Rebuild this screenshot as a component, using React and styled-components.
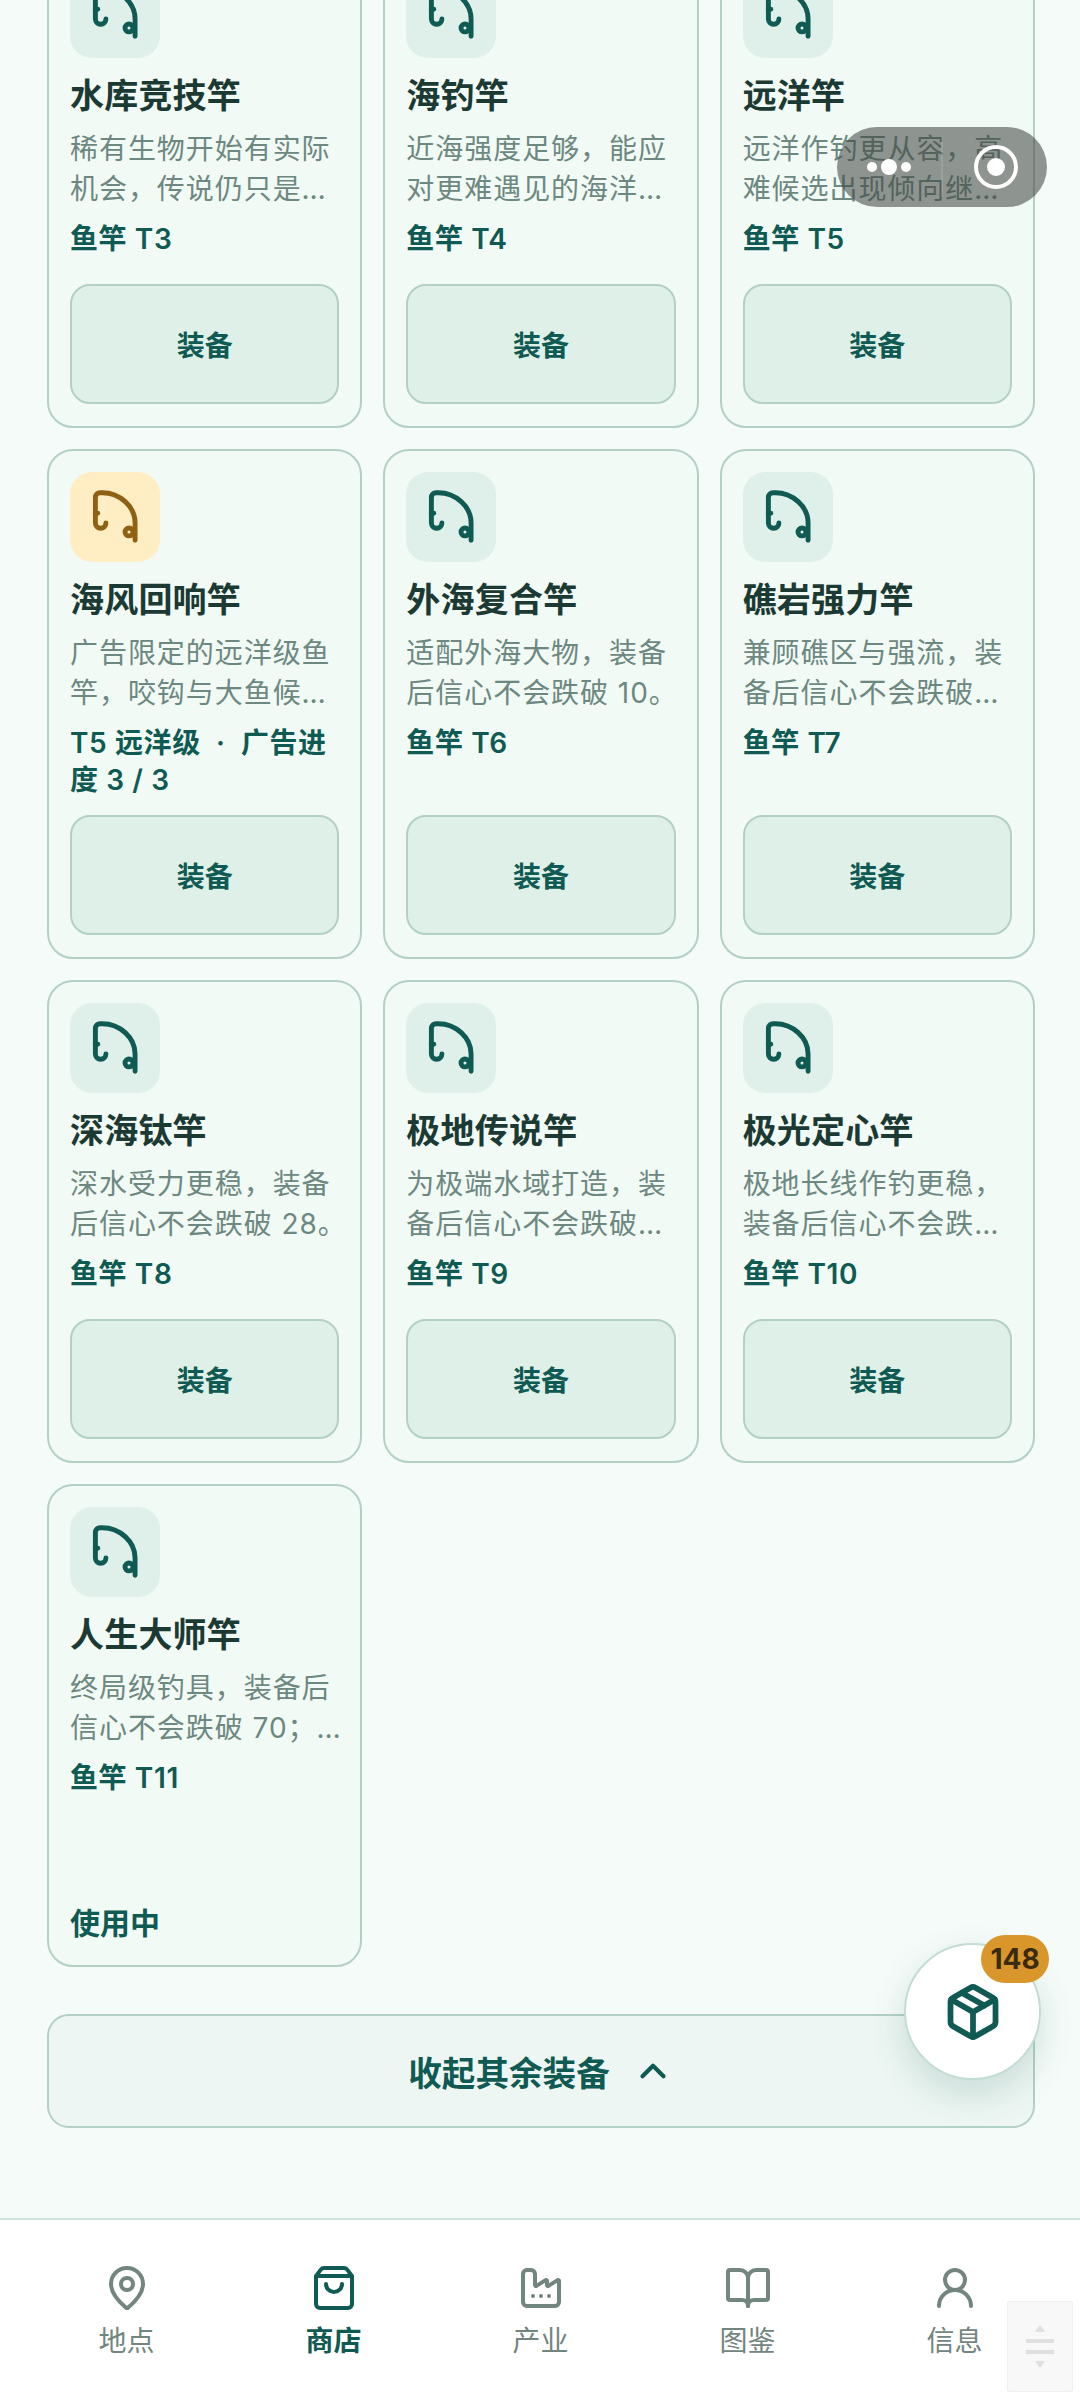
import styled, { createGlobalStyle } from 'styled-components'
import { BookOpen, ChevronUp, Factory, MapPin, Package, ShoppingBag, UserRound } from 'lucide-react'

const GlobalStyle = createGlobalStyle`
  html, body {
    margin: 0;
    padding: 0;
    background: #f5fbf8;
  }
  * {
    box-sizing: border-box;
  }
  body {
    font-family: "Inter", "Noto Sans CJK SC", sans-serif;
  }
`;

const Page = styled.div`
  position: relative;
  width: 1080px;
  height: 2400px;
  display: flex;
  flex-direction: column;
  overflow: hidden;
  background: #f5fbf8;
`;

const Scroller = styled.div`
  flex: 1;
  min-height: 0;
  overflow: hidden;
  padding: 0 45px 0 47px;
`;

/* the page is photographed scrolled, the first row is cut by the top edge */
const Grid = styled.div`
  margin-top: -55px;
  display: grid;
  grid-template-columns: repeat(3, 1fr);
  gap: 21px;
`;

const Card = styled.div`
  display: flex;
  flex-direction: column;
  padding: 21px 21px 22px;
  border: 2px solid #b2d0c6;
  border-radius: 26px;
  background: #f2faf6;
`;

const IconBox = styled.div`
  width: 90px;
  height: 90px;
  display: flex;
  align-items: center;
  justify-content: center;
  border-radius: 22px;
  background: ${props => props.ad ? '#ffeec4' : '#dff0ea'};
  color: ${props => props.ad ? '#8f6112' : '#0f5a52'};
`;

const Title = styled.div`
  margin-top: 16px;
  font-size: 34px;
  line-height: 44px;
  letter-spacing: 0.2px;
  font-weight: 700;
  color: #1c3a34;
  white-space: nowrap;
`;

const Desc = styled.div`
  margin: 11px -8px 0 0;
  height: 80px;
  font-size: 28px;
  line-height: 40px;
  letter-spacing: 0.95px;
  color: #6d8880;
  display: -webkit-box;
  -webkit-box-orient: vertical;
  -webkit-line-clamp: 2;
  overflow: hidden;
`;

const Meta = styled.div`
  margin-top: 12px;
  min-height: 47px;
  font-size: 28px;
  line-height: 37px;
  letter-spacing: 0.6px;
  font-weight: 600;
  color: #0f5a52;
`;

const Footer = styled.div`
  margin-top: auto;
  padding-top: 13px;
  min-height: 136px;
  display: flex;
  align-items: flex-end;
`;

const EquipButton = styled.div`
  width: 100%;
  height: 120px;
  display: flex;
  align-items: center;
  justify-content: center;
  border: 2px solid #b2d0c6;
  border-radius: 20px;
  background: #dff0e9;
  font-size: 28px;
  font-weight: 700;
  color: #0f5a52;
`;

const InUse = styled.div`
  font-size: 30px;
  line-height: 40px;
  font-weight: 700;
  color: #0f5a52;
`;

const Toggle = styled.div`
  margin-top: 47px;
  height: 114px;
  display: flex;
  align-items: center;
  justify-content: center;
  gap: 22px;
  border: 2px solid #b2d0c6;
  border-radius: 22px;
  background: #edf6f2;
  font-size: 33.6px;
  font-weight: 700;
  color: #0f5a52;
`;

const Nav = styled.nav`
  height: 182px;
  flex-shrink: 0;
  display: grid;
  grid-template-columns: repeat(5, 207px);
  padding: 44px 0 0 23px;
  border-top: 2px solid #cfe3dc;
  background: #ffffff;
`;

const Tab = styled.div`
  display: flex;
  flex-direction: column;
  align-items: center;
  gap: 9px;
  color: ${props => props.active ? '#0f5a52' : '#72857f'};
  font-size: 28px;
  line-height: 40px;
  font-weight: ${props => props.active ? 700 : 400};
`;

const Fab = styled.div`
  position: absolute;
  left: 904px;
  top: 1943px;
  width: 137px;
  height: 137px;
  display: flex;
  align-items: center;
  justify-content: center;
  border: 2px solid #c3dcd4;
  border-radius: 50%;
  background: #ffffff;
  color: #0f5a52;
  box-shadow: 0 14px 36px rgba(15, 90, 82, 0.16);
`;

const Badge = styled.div`
  position: absolute;
  left: 75px;
  top: -10px;
  width: 68px;
  height: 48px;
  display: flex;
  align-items: center;
  justify-content: center;
  border-radius: 24px;
  background: #d9962a;
  font-size: 28px;
  font-weight: 700;
  color: #3a2a10;
`;

const Capsule = styled.div`
  position: absolute;
  left: 837px;
  top: 127px;
  width: 210px;
  height: 80px;
  display: flex;
  align-items: center;
  border-radius: 40px;
  background: rgba(64, 68, 64, 0.56);
`;

const CapsuleSide = styled.div`
  width: 104px;
  height: 100%;
  display: flex;
  align-items: center;
  justify-content: center;
  gap: 4px;
`;

const Dot = styled.span`
  width: ${props => props.big ? 16 : 10}px;
  height: ${props => props.big ? 16 : 10}px;
  border-radius: 50%;
  background: #ffffff;
`;

const CapsuleLine = styled.div`
  width: 2px;
  height: 60px;
  background: rgba(255, 255, 255, 0.12);
`;

const RecordRing = styled.div`
  margin-left: 31px;
  width: 44px;
  height: 44px;
  display: flex;
  align-items: center;
  justify-content: center;
  border: 4px solid #ffffff;
  border-radius: 50%;
  &::after {
    content: '';
    width: 18px;
    height: 18px;
    border-radius: 50%;
    background: #ffffff;
  }
`;

const ScrollHandle = styled.div`
  position: absolute;
  left: 1007px;
  top: 2301px;
  width: 66px;
  height: 91px;
  display: flex;
  flex-direction: column;
  align-items: center;
  justify-content: center;
  gap: 7px;
  border: 1px solid #f0f0f0;
  border-radius: 2px;
  background: #f8f8f8;
`;

const HandleBar = styled.span`
  width: 28px;
  height: 4px;
  background: #dfdfdf;
`;

const HandleArrow = styled.span`
  width: 0;
  height: 0;
  border-left: 5px solid transparent;
  border-right: 5px solid transparent;
  border-${props => props.down ? 'top' : 'bottom'}: 7px solid #dfdfdf;
`;

const RodIcon = () => (
  <svg width="56" height="56" viewBox="0 0 24 24" fill="none" stroke="currentColor" strokeWidth="2.1" strokeLinecap="round" strokeLinejoin="round">
    <path d="M8.1 14.6a2.25 2.25 0 0 1-4.5 0V3.6a2 2 0 0 1 2-2h1C14 1.6 20.6 7.5 20.6 14.5V22" />
    <path d="M3.6 10.4h1" />
    <circle cx="18" cy="18.4" r="1.7" />
  </svg>
);

const rods = [
  { name: '水库竞技竿', desc: '稀有生物开始有实际机会，传说仍只是可遇不可求的目标', meta: '鱼竿 T3' },
  { name: '海钓竿', desc: '近海强度足够，能应对更难遇见的海洋鱼种与突然发力', meta: '鱼竿 T4' },
  { name: '远洋竿', desc: '远洋作钓更从容，高难候选出现倾向继续提升，收益更好', meta: '鱼竿 T5' },
  { name: '海风回响竿', desc: '广告限定的远洋级鱼竿，咬钩与大鱼候选都有明显提升', meta: 'T5 远洋级\u00a0\u00a0·\u00a0\u00a0广告进度 3 / 3', ad: true },
  { name: '外海复合竿', desc: '适配外海大物，装备后信心不会跌破 10。', meta: '鱼竿 T6' },
  { name: '礁岩强力竿', desc: '兼顾礁区与强流，装备后信心不会跌破 18，更加稳定', meta: '鱼竿 T7' },
  { name: '深海钛竿', desc: '深水受力更稳，装备后信心不会跌破 28。', meta: '鱼竿 T8' },
  { name: '极地传说竿', desc: '为极端水域打造，装备后信心不会跌破 40，更加稳定', meta: '鱼竿 T9' },
  { name: '极光定心竿', desc: '极地长线作钓更稳，装备后信心不会跌破 55，更加稳定', meta: '鱼竿 T10' },
  { name: '人生大师竿', desc: '终局级钓具，装备后信心不会跌破 70；传说候选再提升', meta: '鱼竿 T11', inUse: true },
];

const tabs = [
  { label: '地点', Icon: MapPin },
  { label: '商店', Icon: ShoppingBag, active: true },
  { label: '产业', Icon: Factory },
  { label: '图鉴', Icon: BookOpen },
  { label: '信息', Icon: UserRound },
];

export default function App() {
  return (
    <Page>
      <GlobalStyle />
      <Scroller>
        <Grid>
          {rods.map(rod => (
            <Card key={rod.name}>
              <IconBox ad={rod.ad}>
                <RodIcon />
              </IconBox>
              <Title>{rod.name}</Title>
              <Desc>{rod.desc}</Desc>
              <Meta>{rod.meta}</Meta>
              <Footer>
                {rod.inUse ? <InUse>使用中</InUse> : <EquipButton>装备</EquipButton>}
              </Footer>
            </Card>
          ))}
        </Grid>
        <Toggle>
          收起其余装备
          <ChevronUp size={42} strokeWidth={2.4} />
        </Toggle>
      </Scroller>

      <Nav>
        {tabs.map(({ label, Icon, active }) => (
          <Tab key={label} active={active}>
            <Icon size={48} strokeWidth={2} />
            {label}
          </Tab>
        ))}
      </Nav>

      <Fab>
        <Package size={60} strokeWidth={2.3} />
        <Badge>148</Badge>
      </Fab>

      <Capsule>
        <CapsuleSide>
          <Dot />
          <Dot big />
          <Dot />
        </CapsuleSide>
        <CapsuleLine />
        <RecordRing />
      </Capsule>

      <ScrollHandle>
        <HandleArrow />
        <HandleBar />
        <HandleBar />
        <HandleArrow down />
      </ScrollHandle>
    </Page>
  )
}
